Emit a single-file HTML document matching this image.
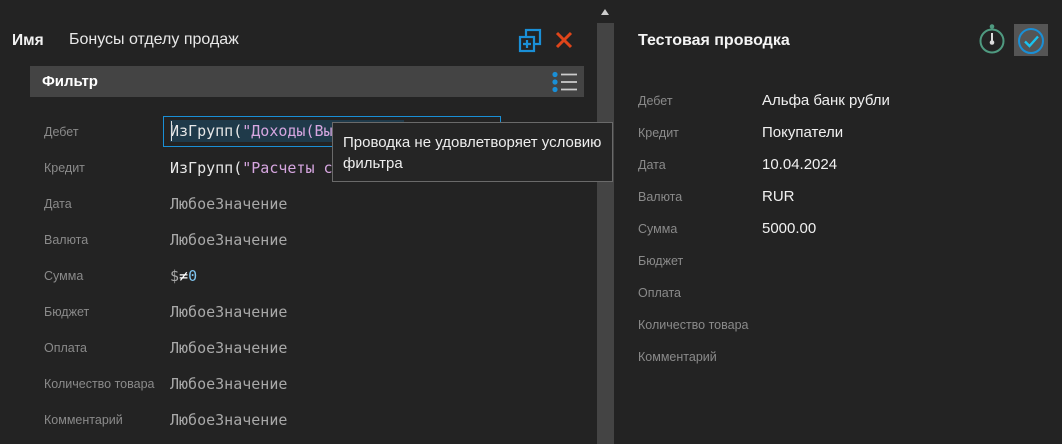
<!DOCTYPE html>
<html><head><meta charset="utf-8"><style>
body{margin:0;width:1062px;height:444px;background:#232323;overflow:hidden;position:relative;font-family:"Liberation Sans","Noto Sans CJK SC",sans-serif;color:#e6e6e6}
.a{position:absolute;white-space:nowrap}
.lbl{color:#8a8a8a;font-size:12.5px}
.mono{font-family:"DejaVu Sans Mono","Liberation Mono",monospace;font-size:15px;color:#a8a8a8}
.rl{color:#8a8a8a;font-size:12.5px}
.rv{color:#f0f0f0;font-size:15px}
</style></head><body>
<div class="a" style="left:12px;top:32px;font-weight:bold;font-size:15.5px;color:#f2f2f2">Имя</div>
<div class="a" style="left:69px;top:31px;font-size:16px;color:#e8e8e8">Бонусы отделу продаж</div>
<svg class="a" style="left:518px;top:28px" width="26" height="26" viewBox="0 0 26 26"><rect x="8" y="2" width="14" height="14" fill="none" stroke="#1a8fd6" stroke-width="2.2"/><rect x="2" y="9" width="14" height="14" fill="#232323" stroke="#1a8fd6" stroke-width="2.2"/><path d="M9 12v8M5 16h8" stroke="#1a8fd6" stroke-width="2.2"/></svg>
<svg class="a" style="left:554px;top:30px" width="20" height="20"><path d="M3 3L17 17M17 3L3 17" stroke="#e0451a" stroke-width="3"/></svg>
<div class="a" style="left:30px;top:66px;width:554px;height:31px;background:#444"></div>
<div class="a" style="left:42px;top:73px;font-weight:bold;font-size:15px;color:#fff">Фильтр</div>
<svg class="a" style="left:551px;top:71px" width="28" height="22"><circle cx="4" cy="3.5" r="2.6" fill="#1a8fd6"/><circle cx="4" cy="11" r="2.6" fill="#1a8fd6"/><circle cx="4" cy="18.5" r="2.6" fill="#1a8fd6"/><path d="M10 3.5h16M10 11h16M10 18.5h16" stroke="#ccc" stroke-width="1.8"/></svg>
<div class="a lbl" style="left:44px;top:125px">Дебет</div>
<div class="a lbl" style="left:44px;top:161px">Кредит</div>
<div class="a lbl" style="left:44px;top:197px">Дата</div>
<div class="a lbl" style="left:44px;top:233px">Валюта</div>
<div class="a lbl" style="left:44px;top:269px">Сумма</div>
<div class="a lbl" style="left:44px;top:305px">Бюджет</div>
<div class="a lbl" style="left:44px;top:341px">Оплата</div>
<div class="a lbl" style="left:44px;top:377px">Количество товара</div>
<div class="a lbl" style="left:44px;top:413px">Комментарий</div>
<div class="a" style="left:163px;top:116px;width:336px;height:29px;border:1px solid #1a8fd6;background:#232323"></div>
<div class="a" style="left:170px;top:120px;width:234px;height:22px;background:#1f3a4a"></div>
<div class="a mono" style="left:170px;top:122px;color:#e8e8e8">ИзГрупп(<span style="color:#d6a6e0">"Доходы(Вы</span></div>
<div class="a" style="left:171px;top:121px;width:1px;height:20px;background:#ddd"></div>
<div class="a mono" style="left:170px;top:159px;color:#e8e8e8">ИзГрупп(<span style="color:#d6a6e0">"Расчеты с</span></div>
<div class="a mono" style="left:170px;top:195px">ЛюбоеЗначение</div>
<div class="a mono" style="left:170px;top:231px">ЛюбоеЗначение</div>
<div class="a mono" style="left:170px;top:267px">$<span style="color:#fff">≠</span><span style="color:#7fc4ef">0</span></div>
<div class="a mono" style="left:170px;top:303px">ЛюбоеЗначение</div>
<div class="a mono" style="left:170px;top:339px">ЛюбоеЗначение</div>
<div class="a mono" style="left:170px;top:375px">ЛюбоеЗначение</div>
<div class="a mono" style="left:170px;top:411px">ЛюбоеЗначение</div>
<div class="a" style="left:597px;top:23px;width:17px;height:421px;background:#444"></div>
<div class="a" style="left:601px;top:9px;width:0;height:0;border-left:4px solid transparent;border-right:4px solid transparent;border-bottom:6px solid #ccc"></div>
<div class="a" style="left:332px;top:122px;width:279px;height:58px;background:#252525;border:1px solid #6a6a6a;z-index:5"></div>
<div class="a" style="left:343px;top:132px;font-size:15px;color:#eee;line-height:21px;z-index:6">Проводка не удовлетворяет условию<br>фильтра</div>
<div class="a" style="left:638px;top:32px;font-weight:bold;font-size:16px;color:#f4f4f4">Тестовая проводка</div>
<svg class="a" style="left:979px;top:23px" width="30" height="32"><circle cx="13" cy="18" r="11.5" fill="none" stroke="#4f9a80" stroke-width="2"/><circle cx="13" cy="3.5" r="2.3" fill="#4f9a80"/><path d="M13 10v9" stroke="#ddd" stroke-width="2"/><circle cx="13" cy="19.5" r="2.3" fill="#ddd"/></svg>
<div class="a" style="left:1014px;top:24px;width:34px;height:32px;background:#555"></div>
<svg class="a" style="left:1017px;top:27px" width="28" height="28"><circle cx="14" cy="14" r="12" fill="none" stroke="#1a8fd6" stroke-width="2"/><path d="M8 14.5l4.5 4.5L21 9.5" fill="none" stroke="#19c3f0" stroke-width="2.4"/></svg>
<div class="a rl" style="left:638px;top:94px">Дебет</div>
<div class="a rl" style="left:638px;top:126px">Кредит</div>
<div class="a rl" style="left:638px;top:158px">Дата</div>
<div class="a rl" style="left:638px;top:190px">Валюта</div>
<div class="a rl" style="left:638px;top:222px">Сумма</div>
<div class="a rl" style="left:638px;top:254px">Бюджет</div>
<div class="a rl" style="left:638px;top:286px">Оплата</div>
<div class="a rl" style="left:638px;top:318px">Количество товара</div>
<div class="a rl" style="left:638px;top:350px">Комментарий</div>
<div class="a rv" style="left:762px;top:92px">Альфа банк рубли</div>
<div class="a rv" style="left:762px;top:124px">Покупатели</div>
<div class="a rv" style="left:762px;top:156px">10.04.2024</div>
<div class="a rv" style="left:762px;top:188px">RUR</div>
<div class="a rv" style="left:762px;top:220px">5000.00</div>
</body></html>
